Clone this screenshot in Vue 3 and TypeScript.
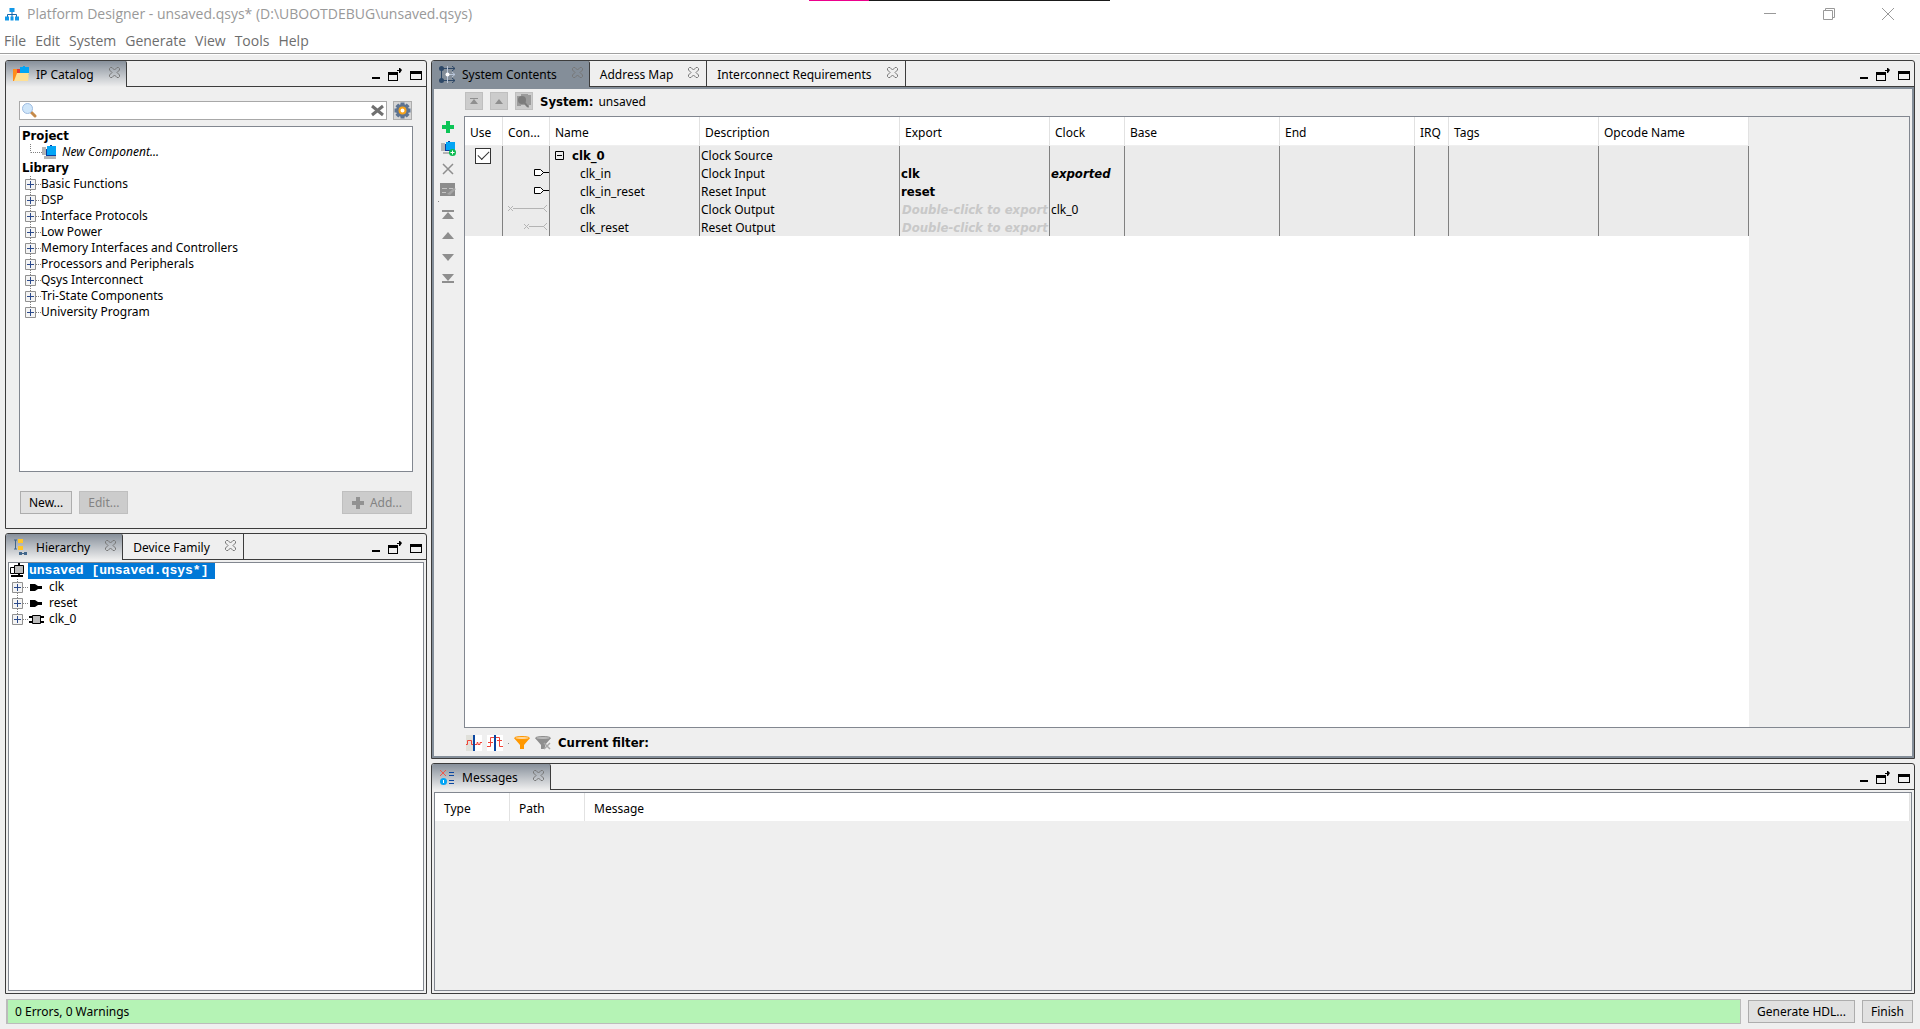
<script setup lang="ts">
import { ref } from 'vue'

interface Row {
  name: string
  description: string
  exported?: string
  placeholder?: boolean
  clock?: string
  clockExported?: boolean
  wire?: string
  muted?: boolean
}

const menus = ['File', 'Edit', 'System', 'Generate', 'View', 'Tools', 'Help']

const library = [
  'Basic Functions',
  'DSP',
  'Interface Protocols',
  'Low Power',
  'Memory Interfaces and Controllers',
  'Processors and Peripherals',
  'Qsys Interconnect',
  'Tri-State Components',
  'University Program',
]

const hierarchy = [
  { name: 'clk', kind: 'port' },
  { name: 'reset', kind: 'port' },
  { name: 'clk_0', kind: 'chip' },
]

const columns = [
  { title: 'Use', width: 38 },
  { title: 'Con...', width: 47 },
  { title: 'Name', width: 150 },
  { title: 'Description', width: 200 },
  { title: 'Export', width: 150 },
  { title: 'Clock', width: 75 },
  { title: 'Base', width: 155 },
  { title: 'End', width: 135 },
  { title: 'IRQ', width: 34 },
  { title: 'Tags', width: 150 },
  { title: 'Opcode Name', width: 150 },
]

const input = 'M31.5 5.5h6l3 3-3 3h-6zM40 8.5h7'
const rows: Row[] = [
  { name: 'clk_in', description: 'Clock Input', exported: 'clk', clock: 'exported', clockExported: true, wire: input },
  { name: 'clk_in_reset', description: 'Reset Input', exported: 'reset', wire: input },
  { name: 'clk', description: 'Clock Output', placeholder: true, clock: 'clk_0', wire: 'M5 6l5 5M10 6l-5 5M10 8.5h31M44 5l-3.500 3.500L44 12', muted: true },
  { name: 'clk_reset', description: 'Reset Output', placeholder: true, wire: 'M21 6l5 5M26 6l-5 5M26 8.5h15M44 5l-3.500 3.500L44 12', muted: true },
]

const moves = [
  'M0 1h12v2H0zM6 3l6 7H0z',
  'M6 2l6 7H0z',
  'M0 3h12L6 10z',
  'M0 2h12L6 9zM0 9h12v2H0z',
]

const query = ref('')
const use = ref(true)
const closeShape = 'M1.500 .5h1.500l2.500 2.500L8 .5h1.500l1 1V3L8 5.500 10.500 8v1.500l-1 1H8L5.500 8 3 10.500H1.500l-1-1V8L3 5.500 .5 3V1.500z'
</script>

<template>
  <div class="app">
    <div class="capture-strip"></div>
    <header class="titlebar">
      <svg class="logo" width="14" height="13" viewBox="0 0 14 13">
        <path d="M7 4v3M2.500 9V6.500h9V9M7 6v3" fill="none" stroke="#1565a8" />
        <path d="M4.500 0h5v4h-5zM0 8.500h4v4H0zM5.500 8.500h3v4h-3zM10 8.500h4v4h-4z" fill="#1298e8" />
      </svg>
      <h1>Platform Designer - unsaved.qsys* (D:\UBOOTDEBUG\unsaved.qsys)</h1>
      <div class="window-buttons">
        <button aria-label="Minimize"><svg width="14" height="14"><path d="M1 6.500h12" /></svg></button>
        <button aria-label="Restore"><svg width="14" height="14"><path d="M1.500 3.500h9v9h-9zM3.500 3V1.500h9v9H11" /></svg></button>
        <button aria-label="Close"><svg width="14" height="14"><path d="M1 1l12 12M13 1L1 13" /></svg></button>
      </div>
    </header>
    <nav class="menubar">
      <button v-for="m in menus" :key="m">{{ m }}</button>
    </nav>

    <main class="workspace">
      <div class="column left">
        <section class="panel">
          <div class="tabs">
            <div class="tab active">
              <svg width="17" height="17" viewBox="0 0 17 17">
                <path d="M0 3h5l1 1v11H0z" fill="#ff8c1a" />
                <path d="M4 3h3v4H4z" fill="#e53935" />
                <path d="M7 1h3V0h2v1h4v8H7z" fill="#03a5f5" />
                <path d="M1 15L4 7h12l-1 8z" fill="#ffe094" />
              </svg>
              <button class="label">IP Catalog</button>
              <button class="close" aria-label="Close tab"><svg width="11" height="11"><path :d="closeShape" /></svg></button>
            </div>
            <div class="panel-buttons">
              <button aria-label="Minimize panel"><svg width="8" height="12"><path d="M0 8h8v2H0z" /></svg></button>
              <button aria-label="Detach panel"><svg width="14" height="13"><path d="M0 4h10v3H0zM0 4h1v9H0zM0 12h10v1H0zM9 7h1v6H9zM7 4h2V2h2V0h1l2 2-2 3h-1V3H9v2H7z" /></svg></button>
              <button aria-label="Maximize panel"><svg width="12" height="13"><path d="M0 3h12v9H0zM1 6v5h10V6z" fill-rule="evenodd" /></svg></button>
            </div>
          </div>
          <div class="catalog">
            <div class="search-row">
              <div class="search">
                <svg width="15" height="15" viewBox="0 0 15 15">
                  <path d="M9 9l4 4" stroke="#c58a4a" stroke-width="3" stroke-linecap="round" />
                  <circle cx="5.500" cy="5.500" r="5" fill="#cfe6fa" stroke="#9dbbe0" />
                </svg>
                <input v-model="query" type="text" aria-label="Search IP catalog" />
                <button aria-label="Clear search">
                  <svg width="13" height="13"><path d="M1 2l11 9M12 2L1 11" stroke="#707070" stroke-width="3" fill="none" /></svg>
                </button>
              </div>
              <button class="gear" aria-label="Catalog settings">
                <svg width="17" height="17" viewBox="-8.500 -8.500 17 17">
                  <g fill="#5d7391">
                    <circle r="6.500" />
                    <path d="M-2-8h4V8h-4zM-8-2H8v4H-8z" />
                    <path transform="rotate(45)" d="M-2-8h4V8h-4zM-8-2H8v4H-8z" />
                  </g>
                  <circle r="3" fill="#fff" stroke="#f5a21b" stroke-width="2" />
                </svg>
              </button>
            </div>
            <div class="tree-box catalog-tree">
              <ul>
                <li class="group">Project</li>
                <li class="new-component">
                  <svg width="34" height="16">
                    <path d="M8.500 0v8.500M9 8.500h11" class="dots" />
                    <path d="M20 3h4v8h-4zM22 12h12v3H22z" fill="#b5b5b5" />
                    <path d="M24 5h9v7h-9zM28 1h2v2h-2zM32 11h2v1h-2z" fill="#0b3fa0" />
                    <path d="M25 2h9v9h-9z" fill="#03a5f5" />
                  </svg>
                  <span>New Component...</span>
                </li>
                <li class="group">Library</li>
                <li v-for="(item, i) in library" :key="item">
                  <svg width="19" height="16">
                    <path :d="i < library.length - 1 ? 'M8.500 0v16M14 8.500h5' : 'M8.500 0v3M14 8.500h5'" class="dots" />
                    <path d="M3.500 3.500h10v10h-10z" class="expander" />
                    <path d="M5 8.500h7M8.500 5v7" class="plus" />
                  </svg>
                  <span>{{ item }}</span>
                </li>
              </ul>
            </div>
            <div class="catalog-actions">
              <button class="push">New...</button>
              <button class="push" disabled>Edit...</button>
              <button class="push add" disabled>
                <svg width="12" height="12"><path d="M4 0h4v4h4v4H8v4H4V8H0V4h4z" fill="#929292" /></svg>
                Add...
              </button>
            </div>
          </div>
        </section>

        <section class="panel">
          <div class="tabs">
            <div class="tab active">
              <svg width="17" height="17" viewBox="0 0 17 17">
                <path d="M1 1h3M2.500 1v9M1 10h3" stroke="#41668a" fill="none" />
                <path d="M5 0h5v4H5zM5 7h5v4H5z" fill="#ffc62a" />
                <path d="M6 13h3v3H6zM11 13h3v3h-3z" fill="#41668a" />
                <path d="M8 14.500h5" stroke="#41668a" />
              </svg>
              <button class="label">Hierarchy</button>
              <button class="close" aria-label="Close tab"><svg width="11" height="11"><path :d="closeShape" /></svg></button>
            </div>
            <div class="tab">
              <button class="label">Device Family</button>
              <button class="close" aria-label="Close tab"><svg width="11" height="11"><path :d="closeShape" /></svg></button>
            </div>
            <div class="panel-buttons">
              <button aria-label="Minimize panel"><svg width="8" height="12"><path d="M0 8h8v2H0z" /></svg></button>
              <button aria-label="Detach panel"><svg width="14" height="13"><path d="M0 4h10v3H0zM0 4h1v9H0zM0 12h10v1H0zM9 7h1v6H9zM7 4h2V2h2V0h1l2 2-2 3h-1V3H9v2H7z" /></svg></button>
              <button aria-label="Maximize panel"><svg width="12" height="13"><path d="M0 3h12v9H0zM1 6v5h10V6z" fill-rule="evenodd" /></svg></button>
            </div>
          </div>
          <div class="tree-box hierarchy-tree">
            <ul>
              <li class="root">
                <svg width="17" height="16">
                  <path d="M1.500 4.500h4v6h-4z" stroke="#000" fill="#fff" />
                  <path d="M2 12h12v2H2z" />
                  <path d="M5.500 2.500h9v8h-9z" stroke="#000" fill="#bbb" />
                  <path d="M9 0h2v2H9zM9 11h2v3H9z" />
                </svg>
                <span>unsaved [unsaved.qsys*]</span>
              </li>
              <li v-for="(node, i) in hierarchy" :key="node.name">
                <svg width="37" height="16">
                  <path :d="i < 2 ? 'M8.500 0v16M14 8.500h5' : 'M8.500 0v3M14 8.500h5'" class="dots" />
                  <path d="M3.500 3.500h10v10h-10z" class="expander" />
                  <path d="M5 8.500h7M8.500 5v7" class="plus" />
                  <path v-if="node.kind === 'port'" d="M21 5h5l3 2h4v3h-4l-3 2h-5z" />
                  <g v-else>
                    <path d="M20 5h15v2H20zM20 10h15v2H20z" />
                    <path d="M23.500 4.500h8v8h-8z" fill="#bbb" stroke="#000" />
                  </g>
                </svg>
                <span>{{ node.name }}</span>
              </li>
            </ul>
          </div>
        </section>
      </div>

      <div class="column right">
        <section class="panel focused">
          <div class="tabs">
            <div class="tab active">
              <svg width="17" height="17" viewBox="0 0 17 17">
                <path d="M2.500 2v12M3 2.500h13M3 14.500h13M13 0l3 2.500L13 5M13 12l3 2.500-3 2.500" stroke="#2d4766" fill="none" />
                <path d="M8.500 0v17M8 8.500h8M13 6l3 2.500-3 2.500" stroke="#b9c6da" fill="none" />
                <circle cx="2.500" cy="2.500" r="2.500" fill="#2d4766" />
                <circle cx="2.500" cy="14.500" r="2.500" fill="#2d4766" />
                <circle cx="8.500" cy="8.500" r="2" fill="#fff" />
              </svg>
              <button class="label">System Contents</button>
              <button class="close" aria-label="Close tab"><svg width="11" height="11"><path :d="closeShape" /></svg></button>
            </div>
            <div class="tab">
              <button class="label">Address Map</button>
              <button class="close" aria-label="Close tab"><svg width="11" height="11"><path :d="closeShape" /></svg></button>
            </div>
            <div class="tab">
              <button class="label">Interconnect Requirements</button>
              <button class="close" aria-label="Close tab"><svg width="11" height="11"><path :d="closeShape" /></svg></button>
            </div>
            <div class="panel-buttons">
              <button aria-label="Minimize panel"><svg width="8" height="12"><path d="M0 8h8v2H0z" /></svg></button>
              <button aria-label="Detach panel"><svg width="14" height="13"><path d="M0 4h10v3H0zM0 4h1v9H0zM0 12h10v1H0zM9 7h1v6H9zM7 4h2V2h2V0h1l2 2-2 3h-1V3H9v2H7z" /></svg></button>
              <button aria-label="Maximize panel"><svg width="12" height="13"><path d="M0 3h12v9H0zM1 6v5h10V6z" fill-rule="evenodd" /></svg></button>
            </div>
          </div>
          <div class="system">
            <div class="system-head">
              <button class="tool" disabled aria-label="Top of system"><svg width="16" height="16"><path d="M4 5h8v1H4zM8 6l4 5H4z" fill="#8f8f8f" /></svg></button>
              <button class="tool" disabled aria-label="Up one level"><svg width="16" height="16"><path d="M8 6l4 5H4z" fill="#8f8f8f" /></svg></button>
              <button class="tool" disabled aria-label="Drill into subsystem">
                <svg width="16" height="16"><path d="M1 3h4V1h7v1h3v10h-2v3l-4-3H5v1H1z" fill="#9b9b9b" /><circle cx="6" cy="7" r="4" fill="#7c7c7c" /><path d="M8 9l4 5" stroke="#7c7c7c" stroke-width="2" /></svg>
              </button>
              <p><b>System:</b><span>unsaved</span></p>
            </div>
            <div class="system-body">
              <div class="side-tools">
                <button aria-label="Add"><svg width="16" height="16"><path d="M6 2h4v4h4v4h-4v4H6v-4H2V6h4z" fill="#0cc456" /></svg></button>
                <button aria-label="Add component">
                  <svg width="16" height="16">
                    <path d="M1 3h4v8H1zM3 12h9v2H3z" fill="#b5b5b5" />
                    <path d="M5 4h9v7H5zM8 1h2v2H8z" fill="#0b3fa0" />
                    <path d="M6 2h9v8H6z" fill="#03a5f5" />
                    <circle cx="12.500" cy="12.500" r="3.500" fill="#0cbb50" />
                    <path d="M12 10.500h1v1.500h1.500v1H13v1.500h-1V13h-1.500v-1H12z" fill="#fff" />
                  </svg>
                </button>
                <button aria-label="Remove"><svg width="16" height="16"><path d="M3 3l10 10M13 3L3 13" stroke="#8e8e8e" stroke-width="1.500" /></svg></button>
                <button aria-label="Edit parameters">
                  <svg width="16" height="16">
                    <path d="M0 1h15v13H0z" fill="#8c8c8c" />
                    <path d="M2 6.500h5M2 10.500h4M9 6.500h4" stroke="#c4c4c4" />
                    <path d="M7 12l7-6 2 1-6 6z" fill="#a5a5a5" />
                  </svg>
                </button>
                <i></i>
                <button v-for="(m, i) in moves" :key="i" aria-label="Move row">
                  <svg width="12" height="12"><path :d="m" fill="#8e8e8e" /></svg>
                </button>
              </div>
              <div class="grid-box">
                <div class="grid-sheet">
                  <table class="contents">
                    <colgroup>
                      <col v-for="c in columns" :key="c.title" :style="{ width: c.width + 'px' }" />
                    </colgroup>
                    <thead>
                      <tr><th v-for="c in columns" :key="c.title">{{ c.title }}</th></tr>
                    </thead>
                    <tbody>
                      <tr>
                        <td class="use"><input v-model="use" type="checkbox" aria-label="Use clk_0" /></td>
                        <td></td>
                        <td>
                          <div class="instance">
                            <svg width="10" height="10"><path d="M.5 .5h8v8h-8zM2 4.500h5" fill="none" stroke="#000" /></svg>
                            <b>clk_0</b>
                          </div>
                        </td>
                        <td>Clock Source</td>
                        <td v-for="n in 7" :key="n"></td>
                      </tr>
                      <tr v-for="r in rows" :key="r.name">
                        <td></td>
                        <td class="wire">
                          <svg width="47" height="18"><path :d="r.wire" :fill="r.muted ? 'none' : '#fff'" :stroke="r.muted ? '#b4b4b4' : '#000'" /></svg>
                        </td>
                        <td class="port">{{ r.name }}</td>
                        <td>{{ r.description }}</td>
                        <td>
                          <em v-if="r.placeholder" class="hint">Double-click to export</em>
                          <b v-else>{{ r.exported }}</b>
                        </td>
                        <td :class="{ strong: r.clockExported }">{{ r.clock }}</td>
                        <td v-for="n in 5" :key="n"></td>
                      </tr>
                    </tbody>
                  </table>
                </div>
              </div>
            </div>
            <div class="filter-bar">
              <button aria-label="Show clock domains">
                <svg width="16" height="16"><path d="M0 0h8v16H0z" fill="#e0e0da" /><path d="M8 0h8v16H8z" fill="#fff" /><path d="M0 9.500h1.500v-4h4v4H11V7.500h1v2h2v-2h2" fill="none" stroke="#f04438" /><path d="M7 0h2v16H7z" fill="#0b47a1" /></svg>
              </button>
              <button aria-label="Show reset domains">
                <svg width="16" height="16"><path d="M0 0h16v16H0z" fill="#fff" /><path d="M0 11.500h3.500v-9h9v9H16M1 7.500h5M10 5.500h5" fill="none" stroke="#f04438" /><path d="M7 0h2v16H7z" fill="#0b47a1" /></svg>
              </button>
              <i></i>
              <button aria-label="Filters">
                <svg width="16" height="16"><path d="M0 3l6 7v4h4v-4l6-7z" fill="#ff9800" /><ellipse cx="8" cy="3" rx="7.500" ry="1.500" fill="#ffd9a0" stroke="#ff9800" /></svg>
              </button>
              <button aria-label="Clear filter">
                <svg width="16" height="16"><path d="M0 3l6 7v4h4v-4l6-7z" fill="#8e8e8e" /><ellipse cx="8" cy="3" rx="7.500" ry="1.500" fill="#bdbdbd" stroke="#8e8e8e" /><path d="M9 8l6 6M15 8l-6 6" stroke="#a8a8a8" stroke-width="1.500" /></svg>
              </button>
              <b>Current filter:</b>
            </div>
          </div>
        </section>

        <section class="panel">
          <div class="tabs">
            <div class="tab active">
              <svg width="17" height="17" viewBox="0 0 17 17">
                <path d="M1 1l6 6M7 1L1 7" stroke="#f0564a" />
                <path d="M10 3.500h5M10 6.500h5M10 11.500h5M10 14.500h5" stroke="#0b47a1" />
                <circle cx="4.500" cy="12.500" r="3.500" fill="#03a5f5" />
                <path d="M4 11h1v3H4z" fill="#fff" />
              </svg>
              <button class="label">Messages</button>
              <button class="close" aria-label="Close tab"><svg width="11" height="11"><path :d="closeShape" /></svg></button>
            </div>
            <div class="panel-buttons">
              <button aria-label="Minimize panel"><svg width="8" height="12"><path d="M0 8h8v2H0z" /></svg></button>
              <button aria-label="Detach panel"><svg width="14" height="13"><path d="M0 4h10v3H0zM0 4h1v9H0zM0 12h10v1H0zM9 7h1v6H9zM7 4h2V2h2V0h1l2 2-2 3h-1V3H9v2H7z" /></svg></button>
              <button aria-label="Maximize panel"><svg width="12" height="13"><path d="M0 3h12v9H0zM1 6v5h10V6z" fill-rule="evenodd" /></svg></button>
            </div>
          </div>
          <div class="message-box">
            <table class="messages">
              <thead>
                <tr><th>Type</th><th>Path</th><th>Message</th></tr>
              </thead>
            </table>
          </div>
        </section>
      </div>
    </main>

    <footer class="statusbar">
      <p>0 Errors, 0 Warnings</p>
      <button class="push">Generate HDL...</button>
      <button class="push">Finish</button>
    </footer>
  </div>
</template>

<style>
body {
  background: #efefef;
}
</style>

<style scoped>
.app,
.app * {
  box-sizing: border-box;
}
.app {
  position: relative;
  display: flex;
  flex-direction: column;
  min-height: 100vh;
  background: #efefef;
  color: #000;
  font: 12px/16px "Noto Sans", sans-serif;
}
button {
  margin: 0;
  padding: 0;
  border: 0;
  background: none;
  color: inherit;
  font: inherit;
}
svg {
  display: block;
  flex: none;
}
p,
h1,
ul {
  margin: 0;
  padding: 0;
  list-style: none;
}
b,
.group,
.hint,
.strong {
  font-family: "DejaVu Sans Condensed", "DejaVu Sans", sans-serif;
  font-size: 13px;
  font-stretch: condensed;
  font-weight: bold;
}
.capture-strip {
  position: absolute;
  top: 0;
  left: 809px;
  width: 301px;
  height: 1px;
  background: linear-gradient(90deg, #ec008c 60px, #1a1a1a 60px);
}
.titlebar {
  display: flex;
  align-items: center;
  height: 28px;
  padding: 0 25px 0 5px;
  background: #fff;
}
.titlebar h1 {
  flex: 1;
  margin-left: 8px;
  color: #999;
  font: 14px/28px "Open Sans", sans-serif;
}
.window-buttons {
  display: flex;
  gap: 45px;
}
.window-buttons path {
  fill: none;
  stroke: #999;
}
.menubar {
  display: flex;
  gap: 9px;
  height: 26px;
  padding: 1px 0 0 4px;
  border-bottom: 1px solid #a0a0a0;
  background: #fff;
  color: #6d6d6d;
  font: 14px/24px "Open Sans", sans-serif;
}
.workspace {
  flex: 1;
  display: grid;
  grid-template-columns: 422fr 1484fr;
  gap: 4px;
  padding: 5px;
  border-top: 1px solid #fff;
}
.column {
  display: grid;
  gap: 4px;
  min-width: 0;
}
.left {
  grid-template-rows: 469fr 461fr;
}
.right {
  grid-template-rows: 699fr 231fr;
}
.panel {
  display: flex;
  flex-direction: column;
  min-width: 0;
  border: 1px solid #3c3c3c;
  border-radius: 3px 3px 0 0;
}
.tabs {
  display: flex;
  height: 26px;
  border-bottom: 1px solid #3c3c3c;
}
.tab {
  display: flex;
  align-items: center;
  padding: 0 7px 0 10px;
  border-right: 1px solid #3c3c3c;
}
.tab.active {
  height: 26px;
  padding: 0 6px 0 7px;
  border-radius: 2px 2px 0 0;
  background: linear-gradient(#87909b, #efefef);
}
.tab .label {
  margin: 2px 15px 0 0;
}
.tab.active .label {
  margin-left: 6px;
}
.close {
  margin-bottom: 3px;
}
.close path {
  fill: none;
  stroke: #777;
}
.panel-buttons {
  display: flex;
  align-items: center;
  gap: 8px;
  margin-left: auto;
  padding: 2px 4px 0 0;
}
.focused .tab.active {
  background: #848e99;
}
.catalog {
  flex: 1;
  display: flex;
  flex-direction: column;
  padding: 14px 13px;
}
.search-row {
  display: flex;
  gap: 6px;
  margin-bottom: 6px;
}
.search {
  flex: 1;
  display: flex;
  align-items: center;
  height: 19px;
  padding: 0 2px;
  border: 1px solid #a8a8a8;
  background: #fff;
}
.search input {
  flex: 1;
  min-width: 0;
  height: 16px;
  padding: 0 4px;
  border: 0;
  outline: 0;
  background: none;
  font: inherit;
}
.gear,
.tool {
  display: grid;
  place-items: center;
  width: 19px;
  height: 19px;
  margin-right: 1px;
  border: 1px solid #adadad;
  background: #d6d6d6;
}
.tree-box {
  border: 1px solid #828790;
  background: #fff;
}
.catalog-tree {
  flex: 1;
  padding: 1px 2px;
}
.tree-box li {
  display: flex;
  height: 16px;
  white-space: nowrap;
}
.new-component {
  gap: 6px;
  font-style: italic;
}
.dots {
  fill: none;
  stroke: #808080;
  stroke-dasharray: 1 1;
}
.expander {
  fill: #f4f4f4;
  stroke: #919191;
}
.plus {
  stroke: #2b4a8c;
}
.catalog-actions {
  display: flex;
  gap: 7px;
  padding: 19px 1px 0;
}
.push {
  height: 23px;
  padding: 0 8px;
  border: 1px solid #adadad;
  background: #e1e1e1;
  white-space: nowrap;
}
.push:disabled {
  border-color: #bfbfbf;
  background: #ccc;
  color: #838383;
}
.add {
  display: flex;
  align-items: center;
  gap: 6px;
  margin-left: auto;
  padding: 0 9px;
}
.hierarchy-tree {
  flex: 1;
  margin: 2px;
}
.root span {
  padding: 0 7px 0 1px;
  margin-left: 2px;
  background: #0078d7;
  color: #fff;
  font: bold 13px/16px "Liberation Mono", monospace;
}
.hierarchy-tree li:not(.root) span {
  margin-left: 3px;
}
.system {
  flex: 1;
  display: flex;
  flex-direction: column;
  border: 2px solid #848e99;
}
.system-head {
  display: flex;
  align-items: center;
  gap: 6px;
  height: 27px;
  padding: 0 0 4px 31px;
}
.tool {
  width: 18px;
  height: 18px;
  border-color: #bfbfbf;
  background: #ccc;
}
.system-head p {
  display: flex;
  gap: 5px;
  padding-top: 2px;
}
.system-body {
  flex: 1;
  display: flex;
  padding-right: 2px;
}
.side-tools {
  display: flex;
  flex-direction: column;
  align-items: center;
  width: 30px;
  padding-right: 2px;
}
.side-tools button {
  display: grid;
  place-items: center;
  height: 21px;
}
.side-tools i {
  width: 1px;
  height: 1px;
  margin: 1px 20px 2px 0;
  background: #888;
}
.grid-box {
  flex: 1;
  display: flex;
  min-width: 0;
  border: 1px solid #828790;
}
.grid-sheet {
  width: 1284px;
  background: #fff;
}
table {
  table-layout: fixed;
  border-spacing: 0;
}
th,
td {
  overflow: hidden;
  padding: 0;
  text-align: left;
  white-space: nowrap;
}
th {
  height: 28px;
  border-right: 1px solid #e2e2e2;
  background: #fff;
  font-weight: normal;
}
.contents {
  width: 100%;
}
.contents th {
  height: 29px;
  padding: 3px 0 0 5px;
  border-bottom: 1px solid #efefef;
}
.contents td {
  height: 18px;
  padding: 1px 0 0 1px;
  border-right: 1px solid #808080;
  background: #ebebeb;
}
.contents .use {
  padding-left: 10px;
}
.contents td.use,
.contents td.wire {
  line-height: 0;
}
.contents td.wire {
  padding: 0;
}
input[type="checkbox"] {
  display: grid;
  place-items: center;
  appearance: none;
  width: 16px;
  height: 16px;
  margin: 0;
  border: 1px solid #333;
  background: #fff;
}
input[type="checkbox"]:checked::before {
  content: "";
  width: 10px;
  height: 5px;
  margin-bottom: 3px;
  border: solid #333;
  border-width: 0 0 1px 1px;
  transform: rotate(-45deg);
}
.instance {
  display: flex;
  align-items: center;
  gap: 7px;
  padding-left: 4px;
}
.contents .port {
  padding-left: 30px;
}
.hint {
  padding-left: 1px;
  color: #c8c8c8;
}
td b,
.hint {
  line-height: 15px;
}
.strong {
  font-style: italic;
}
.filter-bar {
  display: flex;
  align-items: center;
  gap: 5px;
  height: 28px;
  padding: 2px 0 0 32px;
}
.filter-bar i {
  width: 1px;
  height: 1px;
  background: #888;
}
.filter-bar b {
  margin-left: 2px;
}
.message-box {
  flex: 1;
  margin: 2px;
  padding-right: 1px;
  border: 1px solid #828790;
}
.messages {
  width: 100%;
}
.messages th {
  padding: 3px 0 0 9px;
}
.messages th:nth-child(-n + 2) {
  width: 75px;
}
.statusbar {
  display: flex;
  align-items: center;
  gap: 7px;
  padding: 0 7px 5px 6px;
}
.statusbar p {
  flex: 1;
  padding: 3px 7px;
  border: 1px solid #bbb;
  border-left-width: 2px;
  background: #b5f3b5;
  line-height: 17px;
}
</style>
